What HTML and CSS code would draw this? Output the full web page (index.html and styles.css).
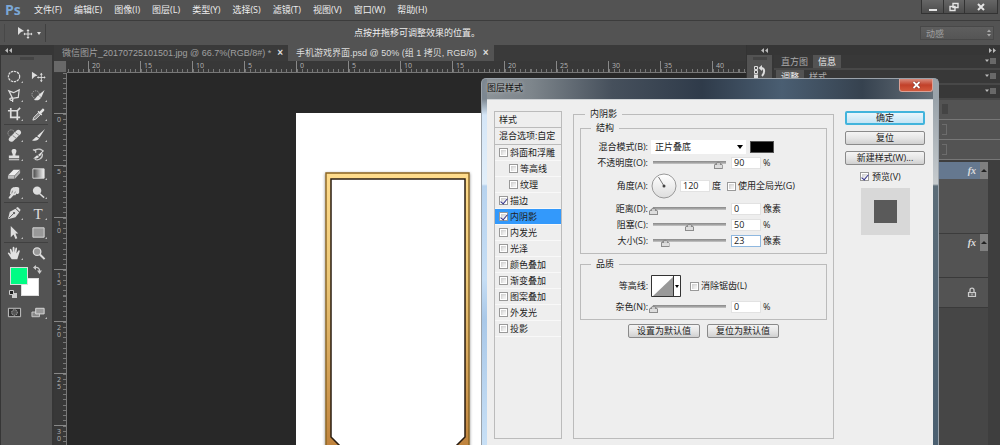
FILE: index.html
```html
<!DOCTYPE html>
<html lang="zh-CN">
<head>
<meta charset="utf-8">
<title>Photoshop</title>
<link rel="stylesheet" href="styles.css">
</head>
<body>
<div class="app">
  <header class="menubar">
    <span class="logo">Ps</span>
    <nav class="menus">
      <button>文件(F)</button><button>编辑(E)</button><button>图像(I)</button><button>图层(L)</button><button>类型(Y)</button><button>选择(S)</button><button>滤镜(T)</button><button>视图(V)</button><button>窗口(W)</button><button>帮助(H)</button>
    </nav>
    <div class="winctl">
      <button aria-label="最小化"><svg width="12" height="10" viewBox="0 0 12 10"><path d="M2 7h8v2H2z" fill="#e4e4e4"/></svg></button>
      <button aria-label="还原"><svg width="12" height="10" viewBox="0 0 12 10"><path d="M5 1.500h5v4H5zM2 4.500h5v4H2z" fill="#555" stroke="#e4e4e4" stroke-width="1.400"/></svg></button>
      <button class="wide" aria-label="关闭"><svg width="12" height="10" viewBox="0 0 12 10"><path d="M3 2l6 6M9 2L3 8" stroke="#e4e4e4" stroke-width="2"/></svg></button>
    </div>
  </header>

  <div class="options">
    <button class="current-tool" aria-label="移动工具">
      <svg width="28" height="14" viewBox="0 0 28 14"><path d="M1 1l6 4-3 1-3 3z" fill="#ddd"/><path d="M11 4v8M7 8h8" stroke="#ddd"/><path d="M9.500 5L11 3l1.500 2zM9.500 11l1.500 2 1.500-2zM8 6.500L6.500 8 8 9.500zM14 6.500L15.500 8 14 9.500z" fill="#ddd"/><path d="M20 6h4l-2 3z" fill="#ddd"/></svg>
    </button>
    <p class="hint">点按并拖移可调整效果的位置。</p>
    <div class="workspace">
      <select aria-label="工作区"><option>动感</option></select>
      <svg class="updown" width="6" height="8" viewBox="0 0 6 8"><path d="M1 3l2-2.500L5 3zM1 5l2 2.500L5 5z" fill="#aaa"/></svg>
    </div>
  </div>

  <main class="body">
    <aside class="tools">
      <div class="strip"><svg width="7" height="5" viewBox="0 0 7 5"><path d="M3 0v5L0 2.500zM7 0v5L4 2.500z" fill="#bbb"/></svg></div>
      <div class="toolbox">
        <div class="handle"></div>
        <div class="toolgrid">
          <button class="tool" aria-label="椭圆选框"><svg viewBox="0 0 16 16"><ellipse cx="7.500" cy="8" rx="6" ry="5.500" fill="none" stroke="#ddd" stroke-width="1.300" stroke-dasharray="2.500 .8"/></svg></button>
          <button class="tool plain" aria-label="移动"><svg viewBox="0 0 16 16"><path d="M1 3l6 4-3 1-3 3z" fill="#ddd"/><path d="M11 5v8M7 9h8" stroke="#ddd"/><path d="M9.500 6L11 4l1.500 2zM9.500 12l1.500 2 1.500-2zM8 7.500L6.500 9 8 10.500zM14 7.500L15.500 9 14 10.500z" fill="#ddd"/></svg></button>
          <button class="tool" aria-label="多边形套索"><svg viewBox="0 0 16 16"><path d="M2 3l5 2 6-3-1 8-6 1zM6 11c-3-1-4 1-2 2s3-1 2-2v4" fill="none" stroke="#ddd" stroke-width="1.300"/></svg></button>
          <button class="tool" aria-label="快速选择"><svg viewBox="0 0 16 16"><circle cx="5" cy="7" r="4" fill="none" stroke="#aaa" stroke-dasharray="1.500 1"/><path d="M14.500 2L8 7.500l3 2.500zM8 8c-2 0-2 3-5 4.500 3.500 1.500 7 0 7.500-2.500z" fill="#e2e2e2"/></svg></button>
          <button class="tool" aria-label="裁剪"><svg viewBox="0 0 16 16"><path d="M4 1v10h10M1 4h10v10M11 4l3-3" fill="none" stroke="#ddd" stroke-width="1.800"/></svg></button>
          <button class="tool" aria-label="吸管"><svg viewBox="0 0 16 16"><path d="M2 14l1-3 5-5 2 2-5 5z" fill="#888" stroke="#ddd"/><path d="M7 5l4 4 1-1-1-1 3-3c1-1-1-3-2-2L9 5 8 4z" fill="#e2e2e2"/></svg></button>
          <i class="sep"></i>
          <button class="tool" aria-label="修复画笔"><svg viewBox="0 0 16 16"><circle cx="4.500" cy="5.500" r="3.500" fill="none" stroke="#aaa" stroke-dasharray="1.500 1"/><path d="M2.500 10.500l8-8c2-2 6 1 4 4l-8 7.500c-3 2-6-1-4-3.500z" fill="#ddd"/><path d="M6 8l4 3M9 5l4 3" stroke="#888"/></svg></button>
          <button class="tool" aria-label="画笔"><svg viewBox="0 0 16 16"><path d="M15 1L6.500 8.500l2.500 2zM6 9.500c-2 0-2 2.500-5 3.500 3 1.500 7 .5 7.500-2z" fill="#e2e2e2"/></svg></button>
          <button class="tool" aria-label="仿制图章"><svg viewBox="0 0 16 16"><path d="M6 7.500C4 4 5 2 7.500 2S11 4 9 7.500V9h4v3H2V9h4zM2 13h11v1.200H2z" fill="#ddd"/></svg></button>
          <button class="tool" aria-label="历史记录画笔"><svg viewBox="0 0 16 16"><path d="M2 3h3v3M3 4c3-3 9-2 10 1M4 13c4 2 9-1 8-6" fill="none" stroke="#ccc" stroke-width="1.300"/><path d="M14 3L7.500 8.500l2 1.700zM7 9c-2 0-2 2-5 3 3 1 6 0 6.500-1.500z" fill="#e2e2e2"/></svg></button>
          <button class="tool" aria-label="橡皮擦"><svg viewBox="0 0 16 16"><path d="M1 10l6-6h7l-6 6z" fill="#eee"/><path d="M1 10.500h7v3H1zM8.500 10.500l5.500-6v3l-5.500 6z" fill="#bbb"/></svg></button>
          <button class="tool" aria-label="渐变"><svg viewBox="0 0 16 16"><defs><linearGradient id="g1"><stop stop-color="#444"/><stop offset="1" stop-color="#f4f4f4"/></linearGradient></defs><path d="M2 3h12v10H2z" fill="url(#g1)" stroke="#ddd"/></svg></button>
          <button class="tool" aria-label="涂抹"><svg viewBox="0 0 16 16"><path d="M3 9l1-4c1-3 4-3 7-3l2 1v5c-1 2-2 2-3 1l-1 2H7l-3 3c-1 1-3 0-2-1l2-3z" fill="#ddd"/><path d="M6 6l-1 3M9 7l-1 2" stroke="#888"/></svg></button>
          <button class="tool" aria-label="减淡"><svg viewBox="0 0 16 16"><circle cx="6.500" cy="6" r="4.500" fill="#ddd"/><path d="M9 9l5 4.500" stroke="#ddd" stroke-width="1.600"/></svg></button>
          <i class="sep"></i>
          <button class="tool" aria-label="钢笔"><svg viewBox="0 0 16 16"><path d="M1 14l2-8 6-3 4 4-4 5z" fill="#ddd"/><path d="M9.500 2l2-1 3 3-1 2z" fill="#ddd"/><path d="M2 13l5-5" stroke="#555"/><circle cx="7.500" cy="7.500" r="1.200" fill="#555"/></svg></button>
          <button class="tool type" aria-label="文字">T</button>
          <button class="tool" aria-label="路径选择"><svg viewBox="0 0 16 16"><path d="M4 1l8 8H9l2 5-2 1-2-5-3 3z" fill="#ddd"/></svg></button>
          <button class="tool" aria-label="矩形"><svg viewBox="0 0 16 16"><path d="M2 3h12v10H2z" fill="#999" stroke="#ddd"/></svg></button>
          <i class="sep"></i>
          <button class="tool" aria-label="抓手"><svg viewBox="0 0 16 16"><path d="M5 14L1 8c-.5-1.500 1-1.500 1.500-.500L4 9 3 4c0-1.500 1.500-1.500 1.800 0L6 7V2c0-1.500 1.800-1.500 2 0v5l1-4.500c.3-1.500 2-1 1.700.5L10 8l2-3c1-1 2-.3 1.500 1L11 14z" fill="#e2e2e2"/></svg></button>
          <button class="tool plain" aria-label="缩放"><svg viewBox="0 0 16 16"><circle cx="6.500" cy="6" r="4" fill="#999" stroke="#ddd" stroke-width="1.400"/><path d="M9.500 9l5 5" stroke="#ddd" stroke-width="2.200"/></svg></button>
        </div>
        <div class="colors">
          <button class="color back" aria-label="背景色"></button>
          <button class="color fore" aria-label="前景色"></button>
          <svg class="swap" width="9" height="9" viewBox="0 0 9 9"><path d="M2 2.500c3-.5 5 1 4.500 4" fill="none" stroke="#ccc" stroke-width="1.300"/><path d="M3 0v5L0 2.500zM4 5.500h5L6.500 9z" fill="#ccc"/></svg>
          <svg class="reset" width="8" height="8" viewBox="0 0 8 8"><path d="M3 3h5v5H3z" fill="#ccc"/><path d="M.5.5h4v4h-4z" fill="#222" stroke="#ccc"/></svg>
        </div>
        <div class="toolgrid">
          <button class="tool plain" aria-label="快速蒙版"><svg viewBox="0 0 16 16"><path d="M1.500 3.500h13v9h-13z" fill="#333" stroke="#ccc"/><circle cx="8" cy="8" r="3" fill="#555" stroke="#ccc" stroke-dasharray="1 1"/></svg></button>
          <button class="tool" aria-label="屏幕模式"><svg viewBox="0 0 16 16"><path d="M1 7.500h8v5H1z" fill="#888" stroke="#ccc"/><path d="M5 3.500h9v6H5z" fill="#999" stroke="#ddd"/></svg></button>
        </div>
      </div>
    </aside>

    <section class="document">
      <div class="tabs">
        <button class="tab">微信图片_20170725101501.jpg @ 66.7%(RGB/8#) *<b>×</b></button>
        <button class="tab active">手机游戏界面.psd @ 50% (组 1 拷贝, RGB/8)<b>×</b></button>
      </div>
      <div class="work">
        <div class="corner"></div>
        <div class="ruler-h"><i></i><span>20</span><span>15</span><span>10</span><span>5</span><span>0</span><span>5</span><span>10</span><span>15</span><span>20</span><span>25</span><span>30</span><span>35</span><span>40</span></div>
        <div class="ruler-v"><i></i><span>0</span><span>5</span><span>10</span><span>15</span><span>20</span><span>25</span><span>30</span></div>
        <div class="canvas">
          <div class="page">
            <svg class="frame" width="152" height="290" viewBox="0 0 152 290">
              <defs>
                <linearGradient id="gold" x1="0" y1="0" x2="0" y2="1"><stop stop-color="#ffdc8c"/><stop offset=".35" stop-color="#ecc878"/><stop offset="1" stop-color="#b87834"/></linearGradient>
                <filter id="shade" x="-10%" y="-10%" width="120%" height="120%"><feDropShadow dx="0" dy="1" stdDeviation="1.500" flood-color="#000" flood-opacity=".5"/></filter>
              </defs>
              <path d="M4 4h143v300H4z" fill="url(#gold)" stroke="#8a6424" stroke-width="1.400" filter="url(#shade)"/>
              <path d="M9 10h134v258l-20 20H29L9 268z" fill="#fff" stroke="#2a1c10" stroke-width="1.500"/>
            </svg>
          </div>
        </div>
      </div>
    </section>

    <aside class="dock">
      <div class="strip end"><svg width="7" height="5" viewBox="0 0 7 5"><path d="M3 0v5L0 2.500zM7 0v5L4 2.500z" fill="#bbb"/></svg></div>
      <div class="dockbox">
        <div class="handle"></div>
        <button class="history" aria-label="历史记录"><svg width="14" height="14" viewBox="0 0 14 14"><path d="M1.500 1.500h3v3h-3zM1.500 5.500h3v3h-3z" fill="none" stroke="#ddd"/><path d="M1 9.500h4V13H1z" fill="#ddd"/><path d="M8 3c4 0 4 5 1 8" fill="none" stroke="#ddd" stroke-width="2"/><path d="M9 0v6L5.500 3z" fill="#ddd"/></svg></button>
      </div>
    </aside>

    <aside class="panels">
      <div class="strip end"><svg width="7" height="5" viewBox="0 0 7 5"><path d="M0 0v5l3-2.500zM4 0v5l3-2.500z" fill="#bbb"/></svg></div>
      <div class="ptabs"><button>直方图</button><button class="on">信息</button><svg class="pmenu" width="11" height="7" viewBox="0 0 11 7"><path d="M0 1.500h4L2 4z" fill="#bbb"/><path d="M5 1h6M5 3h6M5 5h6" stroke="#999"/></svg></div>
      <div class="ptabs"><button class="on">调整</button><button>样式</button><svg class="pmenu" width="11" height="7" viewBox="0 0 11 7"><path d="M0 1.500h4L2 4z" fill="#bbb"/><path d="M5 1h6M5 3h6M5 5h6" stroke="#999"/></svg></div>
      <div class="ptabs"><svg class="pmenu" width="11" height="7" viewBox="0 0 11 7"><path d="M0 1.500h4L2 4z" fill="#bbb"/><path d="M5 1h6M5 3h6M5 5h6" stroke="#999"/></svg></div>
      <div class="prow"><i class="toggle"></i></div>
      <div class="prow"><i class="drop"></i></div>
      <div class="prow"><i class="drop"></i></div>
      <div class="layers">
        <div class="layer selected"><em>fx</em><button aria-label="折叠效果"><svg width="6" height="4" viewBox="0 0 6 4"><path d="M3 0l3 3H0z" fill="#222"/></svg></button></div>
        <div class="effects"></div>
        <div class="layer"><em>fx</em><button aria-label="折叠效果"><svg width="6" height="4" viewBox="0 0 6 4"><path d="M3 0l3 3H0z" fill="#222"/></svg></button></div>
        <div class="gap"></div>
        <div class="layer locked"><svg width="10" height="11" viewBox="0 0 10 11"><path d="M3 5V3c0-2.500 4-2.500 4 0v2" fill="none" stroke="#ccc" stroke-width="1.300"/><path d="M1.500 5.500h7v4h-7z" fill="#666" stroke="#ccc" stroke-width="1.200"/><path d="M5 6.500v2" stroke="#ccc"/></svg></div>
      </div>
    </aside>
  </main>

  <form class="dialog" onsubmit="return false">
    <div class="titlebar">
      <span class="title">图层样式</span>
      <button class="close" aria-label="关闭"><svg width="9" height="8" viewBox="0 0 9 8"><path d="M1.500 1l6 6M7.500 1l-6 6" stroke="#7a2a20" stroke-width="3"/><path d="M1.500 1l6 6M7.500 1l-6 6" stroke="#fff" stroke-width="1.800"/></svg></button>
    </div>
    <div class="content">
      <div class="styles">
        <button class="head">样式</button>
        <button class="head blend">混合选项:自定</button>
        <label><input type="checkbox">斜面和浮雕</label>
        <label class="sub"><input type="checkbox">等高线</label>
        <label class="sub"><input type="checkbox">纹理</label>
        <label><input type="checkbox" checked>描边</label>
        <label class="sel"><input type="checkbox" checked>内阴影</label>
        <label><input type="checkbox">内发光</label>
        <label><input type="checkbox">光泽</label>
        <label><input type="checkbox">颜色叠加</label>
        <label><input type="checkbox">渐变叠加</label>
        <label><input type="checkbox">图案叠加</label>
        <label><input type="checkbox">外发光</label>
        <label><input type="checkbox">投影</label>
      </div>

      <fieldset class="outer">
        <legend>内阴影</legend>
        <fieldset class="inner">
          <legend>结构</legend>
          <div class="row">
            <label class="name" for="mode">混合模式(B):</label>
            <div class="combo"><select id="mode"><option>正片叠底</option></select><svg width="6" height="4" viewBox="0 0 6 4"><path d="M0 0h6L3 4z"/></svg></div>
            <button class="shadow-color" aria-label="阴影颜色"></button>
          </div>
          <div class="row">
            <label class="name" for="opacity">不透明度(O):</label>
            <input type="range" value="90" aria-label="不透明度">
            <input class="num" id="opacity" value="90"><span>%</span>
          </div>
          <div class="row tall">
            <label class="name" for="angle">角度(A):</label>
            <svg class="dial" width="26" height="26" viewBox="0 0 26 26"><defs><linearGradient id="dg" x1="0" y1="0" x2="0" y2="1"><stop stop-color="#fff"/><stop offset="1" stop-color="#ddd"/></linearGradient></defs><circle cx="13" cy="13" r="12" fill="url(#dg)" stroke="#999"/><path d="M13 13L7.500 4" stroke="#777"/><circle cx="13" cy="13" r="1.500" fill="#444"/></svg>
            <input class="num" id="angle" value="120"><span>度</span>
            <label class="check"><input type="checkbox">使用全局光(G)</label>
          </div>
          <div class="row">
            <label class="name" for="distance">距离(D):</label>
            <input type="range" value="0" aria-label="距离">
            <input class="num" id="distance" value="0"><span>像素</span>
          </div>
          <div class="row">
            <label class="name" for="choke">阻塞(C):</label>
            <input type="range" value="50" aria-label="阻塞">
            <input class="num" id="choke" value="50"><span>%</span>
          </div>
          <div class="row">
            <label class="name" for="size">大小(S):</label>
            <input type="range" value="16" aria-label="大小">
            <input class="num focus" id="size" value="23"><span>像素</span>
          </div>
        </fieldset>
        <fieldset class="inner">
          <legend>品质</legend>
          <div class="row contour-row">
            <span class="name">等高线:</span>
            <button class="contour" aria-label="等高线"><svg width="30" height="22" viewBox="0 0 30 22"><path d="M.5.5h29v21H.5z" fill="#fff" stroke="#333"/><path d="M2 21L22 2v19z" fill="#999"/><path d="M22.500 1v20" stroke="#333"/><path d="M24 10h4l-2 3z"/></svg></button>
            <label class="check"><input type="checkbox">消除锯齿(L)</label>
          </div>
          <div class="row">
            <label class="name" for="noise">杂色(N):</label>
            <input type="range" value="0" aria-label="杂色">
            <input class="num" id="noise" value="0"><span>%</span>
          </div>
        </fieldset>
        <div class="defaults"><button class="btn">设置为默认值</button><button class="btn">复位为默认值</button></div>
      </fieldset>

      <div class="side">
        <button class="btn primary">确定</button>
        <button class="btn">复位</button>
        <button class="btn">新建样式(W)...</button>
        <label class="preview"><input type="checkbox" checked>预览(V)</label>
        <div class="thumb"><i></i></div>
      </div>
    </div>
  </form>
</div>
</body>
</html>
```

FILE: styles.css
```css
* { box-sizing: border-box; }

body {
  margin: 0;
  background: #3a3a3a;
  color: #ddd;
  font: 9px/14px "Open Sans", "Noto Sans CJK SC", sans-serif;
}

button, input, select {
  margin: 0;
  padding: 0;
  border: 0;
  background: none;
  color: inherit;
  font: inherit;
  appearance: none;
  outline: 0;
}

i { display: block; font-style: normal; }
svg { display: block; flex: none; }

.app {
  position: relative;
  display: flex;
  flex-direction: column;
  height: 100vh;
  overflow: hidden;
}

/* menu bar */
.menubar {
  display: flex;
  align-items: center;
  height: 20px;
  background: #535353;
}
.logo {
  width: 34px;
  padding-left: 5px;
  color: #7ba7d6;
  font: bold 14px/18px "Open Sans", sans-serif;
}
.menus { display: flex; flex: 1; gap: 12px; white-space: nowrap; color: #eee; }
.winctl {
  display: flex;
  align-self: flex-start;
  margin-right: 2px;
  border: 1px solid #333;
  border-top: 0;
}
.winctl button {
  display: flex;
  align-items: center;
  justify-content: center;
  width: 21px;
  height: 13px;
  background: linear-gradient(#666, #4c4c4c);
}
.winctl button + button { border-left: 1px solid #333; }
.winctl .wide { width: 33px; }

/* options bar */
.options {
  display: flex;
  align-items: center;
  height: 25px;
  padding: 0 6px 0 4px;
  border-top: 1px solid #3c3c3c;
  background: #535353;
}
.current-tool {
  width: 42px;
  height: 18px;
  padding-left: 12px;
  border-left: 1px solid #484848;
  border-right: 1px solid #404040;
}
.hint { flex: 1; margin: 0 0 0 308px; color: #eee; }
.workspace { position: relative; width: 74px; }
.workspace select {
  width: 100%;
  height: 14px;
  padding-left: 5px;
  border: 1px solid #484848;
  background: linear-gradient(#5e5e5e, #555);
  color: #a0a0a0;
}
.updown { position: absolute; right: 2px; top: 3px; }

/* body */
.body {
  display: grid;
  grid-template-columns: 54px 1fr 28px 226px;
  flex: 1;
  min-height: 0;
}
.strip {
  display: flex;
  align-items: center;
  height: 10px;
  padding: 0 4px;
  background: #363636;
}
.strip.end { justify-content: flex-end; }
.handle { width: 14px; height: 3px; margin: 2px auto 0; background: #444; }

.tools { display: flex; flex-direction: column; padding: 0 2px 0 1px; background: #363636; }
.toolbox { flex: 1; background: #535353; }
.toolgrid {
  display: grid;
  grid-template-columns: 24px 24px;
  padding: 0 1px;
}
.handle + .toolgrid { padding-top: 7px; }
.tool {
  position: relative;
  display: flex;
  align-items: center;
  justify-content: center;
  height: 19px;
}
.tool svg { width: 15px; height: 15px; }
.tool::after {
  content: "";
  position: absolute;
  right: 3px;
  bottom: 3px;
  border: 1px solid;
  border-color: transparent #bbb #bbb transparent;
}
.tool.plain::after { display: none; }
.tool.type { font: 15px/18px "Liberation Serif", serif; }
.sep {
  grid-column: 1 / -1;
  height: 2px;
  margin: 0 2px;
  border-top: 1px solid #404040;
}
.colors { position: relative; height: 40px; }
.color { position: absolute; width: 18px; height: 18px; border: 1px solid #ddd; }
.fore { left: 9px; top: 4px; background: #00fc84; }
.back { left: 20px; top: 15px; background: #fff; }
.swap { position: absolute; left: 32px; top: 2px; }
.reset { position: absolute; left: 8px; top: 27px; }

/* document */
.document { display: flex; flex-direction: column; min-width: 0; }
.tabs {
  display: flex;
  height: 16px;
  background: #3a3a3a;
  font-family: "Liberation Sans", "Noto Sans CJK SC", sans-serif;
}
.tab {
  display: flex;
  align-items: center;
  padding: 0 5px 0 8px;
  color: #a0a0a0;
  white-space: nowrap;
}
.tab b { margin-left: 6px; color: #ddd; font-size: 10px; }
.tab.active { background: #535353; color: #ddd; }
.work {
  display: grid;
  grid-template: 12px 1fr / 13px 1fr;
  flex: 1;
  min-height: 0;
}
.corner { margin: 0 1px 1px 0; background: #686868; }
.ruler-h, .ruler-v {
  display: flex;
  overflow: hidden;
  background: #383838;
  color: #b4b4b4;
  font-size: 7px;
  line-height: 9px;
}
.ruler-h { border-bottom: 1px solid #777; }
.ruler-v { flex-direction: column; border-right: 1px solid #777; }
.ruler-h i {
  flex: none;
  width: 21px;
  background: repeating-linear-gradient(270deg, transparent 0 4px, #777 4px 5px) bottom / 100% 3px no-repeat;
}
.ruler-h span {
  flex: none;
  width: 52px;
  padding-left: 3px;
  border-left: 1px solid #888;
  background: repeating-linear-gradient(90deg, #777 0 1px, transparent 1px 10%) bottom / 100% 3px no-repeat;
}
.ruler-v i {
  flex: none;
  height: 40px;
  background: repeating-linear-gradient(0deg, transparent 0 4px, #777 4px 5px) right / 3px 100% no-repeat;
}
.ruler-v span {
  flex: none;
  height: 52px;
  width: 12px;
  padding: 2px 6px 0 3px;
  border-top: 1px solid #888;
  background: repeating-linear-gradient(180deg, #777 0 1px, transparent 1px 10%) right / 3px 100% no-repeat;
  line-height: 7px;
  word-break: break-all;
}
.canvas { position: relative; overflow: hidden; background: #282828; }
.page { position: absolute; left: 229px; top: 40px; right: 0; bottom: 0; background: #fff; }
.frame { position: absolute; left: 26px; top: 56px; }

/* right docks */
.dock { display: flex; flex-direction: column; padding-right: 2px; border-left: 1px solid #333; background: #363636; }
.dockbox { flex: 1; background: #535353; }
.history { display: block; margin: 5px auto; }
.panels { display: flex; flex-direction: column; background: #3e3e3e; }
.ptabs {
  display: flex;
  flex: none;
  height: 15px;
  padding-left: 2px;
  border-bottom: 2px solid #484848;
  background: #383838;
}
.ptabs button { padding: 0 5px; line-height: 12px; color: #aaa; }
.ptabs .on { background: #535353; color: #eee; }
.pmenu { margin: 3px 4px 0 auto; }
.prow {
  height: 20px;
  flex: none;
  padding: 4px 0 0 168px;
  border-bottom: 1px solid #777;
  background: #535353;
}
.toggle { width: 6px; height: 10px; background: #444; }
.drop { width: 5px; height: 11px; border: 1px solid #6c6c6c; border-left: 0; }
.layers {
  display: flex;
  flex-direction: column;
  flex: 1;
  margin: 2px 12px 0 0;
  background: #464646;
}
.layer {
  display: flex;
  align-items: center;
  justify-content: flex-end;
  gap: 4px;
  height: 17px;
  background: #535353;
}
.layer.selected { background: #65788f; }
.layer em { color: #ddd; font: italic bold 10px/12px "Liberation Serif", serif; }
.layer button {
  display: grid;
  place-items: center;
  align-self: stretch;
  width: 8px;
  background: #808080;
}
.effects { height: 55px; border-bottom: 1px solid #3c3c3c; background: #535353; }
.gap { height: 26px; background: #535353; }
.layer.locked {
  height: 31px;
  padding-right: 11px;
  border: solid #3a3a3a;
  border-width: 1px 0;
}

/* layer style dialog */
.dialog {
  position: absolute;
  left: 481px;
  top: 78px;
  bottom: 0;
  width: 458px;
  display: flex;
  flex-direction: column;
  padding: 0 5px;
  border: 1px solid #9aa2aa;
  border-bottom: 0;
  border-radius: 5px 5px 0 0;
  background:
    linear-gradient(#7c8791 20px, #d5e6f7 36px, #e2effa 105px, #b7d3ef 107px, #c6def5 200px, #a9c8e8 240px, #c8e0f6) left / 5px 100% no-repeat,
    linear-gradient(#9aa3aa 20px, #c6cbce 105px, #5b6c78 107px, #4a5f70) right / 5px 100% no-repeat,
    linear-gradient(90deg, #8d9499, #7d858b 50px, #46505c 130px, #2f3b4a 220px, #4a5e72 300px, #36424f 380px, #69737c);
  color: #222;
}
.titlebar { display: flex; align-items: flex-start; justify-content: space-between; height: 20px; flex: none; }
.title { line-height: 18px; color: #111; text-shadow: 0 0 4px #ccc; }
.close {
  display: flex;
  align-items: center;
  justify-content: center;
  width: 34px;
  height: 13px;
  border: 1px solid #dba196;
  border-top: 0;
  border-radius: 0 0 3px 3px;
  background: linear-gradient(#d88b7c, #c2412a 50%, #d2593c);
}
.content {
  display: flex;
  gap: 11px;
  flex: 1;
  min-height: 0;
  padding: 7px 8px 6px 7px;
  border-top: 1px solid #cfd3d6;
  background: #eee;
  white-space: nowrap;
}
.styles {
  width: 68px;
  margin-top: 4px;
  border: 1px solid #bbb;
  flex: none;
}
.styles label, .head {
  display: flex;
  align-items: center;
  gap: 2px;
  width: 100%;
  height: 16px;
  padding-left: 4px;
  border-bottom: 1px solid #f8f8f8;
}
.head { border-bottom: 1px solid #bbb; }
.head.blend { height: 17px; }
.styles .sub { padding-left: 14px; }
.styles .sel { background: #3399fb; }

input[type="checkbox"] {
  flex: none;
  width: 9px;
  height: 9px;
  border: 1px solid #999;
  background: #f2f2f2;
  box-shadow: inset 0 0 0 1px #fff, inset 2px 2px 3px #ccc;
}
input[type="checkbox"]:checked::after {
  content: "";
  display: block;
  width: 3px;
  height: 6px;
  margin: 0 0 0 2px;
  border: solid #34348c;
  border-width: 0 1px 1px 0;
  transform: rotate(40deg);
}

fieldset { margin: 0; border: 1px solid #bbb; min-width: 0; }
legend { height: 14px; padding: 0 5px; }
.outer { flex: 1; padding: 0 6px; }
.outer > legend { margin-left: 5px; }
.inner { padding: 4px 0; }
.inner > legend { margin-left: 10px; }
.inner + .inner { margin-top: 3px; }
.row { display: flex; align-items: center; height: 16px; }
.row.tall { height: 26px; margin: 2px 0; }
.row.contour-row { height: 22px; margin-bottom: 2px; }
.name { width: 67px; margin-right: 3px; text-align: right; }
.combo { position: relative; width: 95px; }
.combo select { display: block; width: 100%; height: 14px; padding-left: 4px; background: #fff; }
.combo svg { position: absolute; right: 3px; top: 5px; }
.shadow-color { width: 24px; height: 12px; margin-left: 4px; background: #000; border: 1px solid #555; }
.num {
  width: 30px;
  height: 12px;
  padding-left: 2px;
  border: 1px solid #e2e2e2;
  background: #fff;
}
.num.focus { border-color: #8fb8e0; }
.num + span { margin-left: 2px; }
.row input[type="range"] {
  width: 81px;
  height: 14px;
  margin: 0 1px 0 -2px;
  background: linear-gradient(#888, #aaa 66%, #ccc) 4px 5px / 73px 3px no-repeat;
}
input[type="range"]::-webkit-slider-thumb {
  appearance: none;
  width: 9px;
  height: 8px;
  margin-top: 4px;
  background:
    linear-gradient(#ddd, #ddd) 1px 4px / 7px 3px no-repeat,
    linear-gradient(#ccc, #ccc) 3px 2px / 3px 2px no-repeat,
    #8c8c8c;
  clip-path: polygon(50% 0, 100% 50%, 100% 100%, 0 100%, 0 50%);
}
.dial { margin-right: 3px; }
.check { display: flex; align-items: center; gap: 2px; }
.tall .check { margin-left: 6px; }
.contour + .check { margin-left: 9px; }

.btn {
  height: 14px;
  border: 1px solid #8a8a8a;
  border-radius: 2px;
  background: linear-gradient(#f4f4f4, #e6e6e6 50%, #d0d0d0);
  line-height: 12px;
}
.defaults { display: flex; justify-content: center; gap: 7px; margin-top: 4px; }
.defaults .btn { width: 72px; }
.side { display: flex; flex-direction: column; gap: 6px; width: 80px; padding-top: 4px; flex: none; }
.side .btn { font-size: 9px; }
.side .primary { border: 2px solid #42b4dc; background: linear-gradient(#eaf6fc, #c4e4f4); line-height: 10px; }
.preview { display: flex; align-items: center; gap: 3px; height: 11px; margin-left: 15px; }
.thumb {
  display: grid;
  place-items: center;
  width: 49px;
  height: 47px;
  margin-left: 16px;
  background: #d8d8d8;
}
.thumb i { width: 23px; height: 23px; background: #5a5a5a; }
```
